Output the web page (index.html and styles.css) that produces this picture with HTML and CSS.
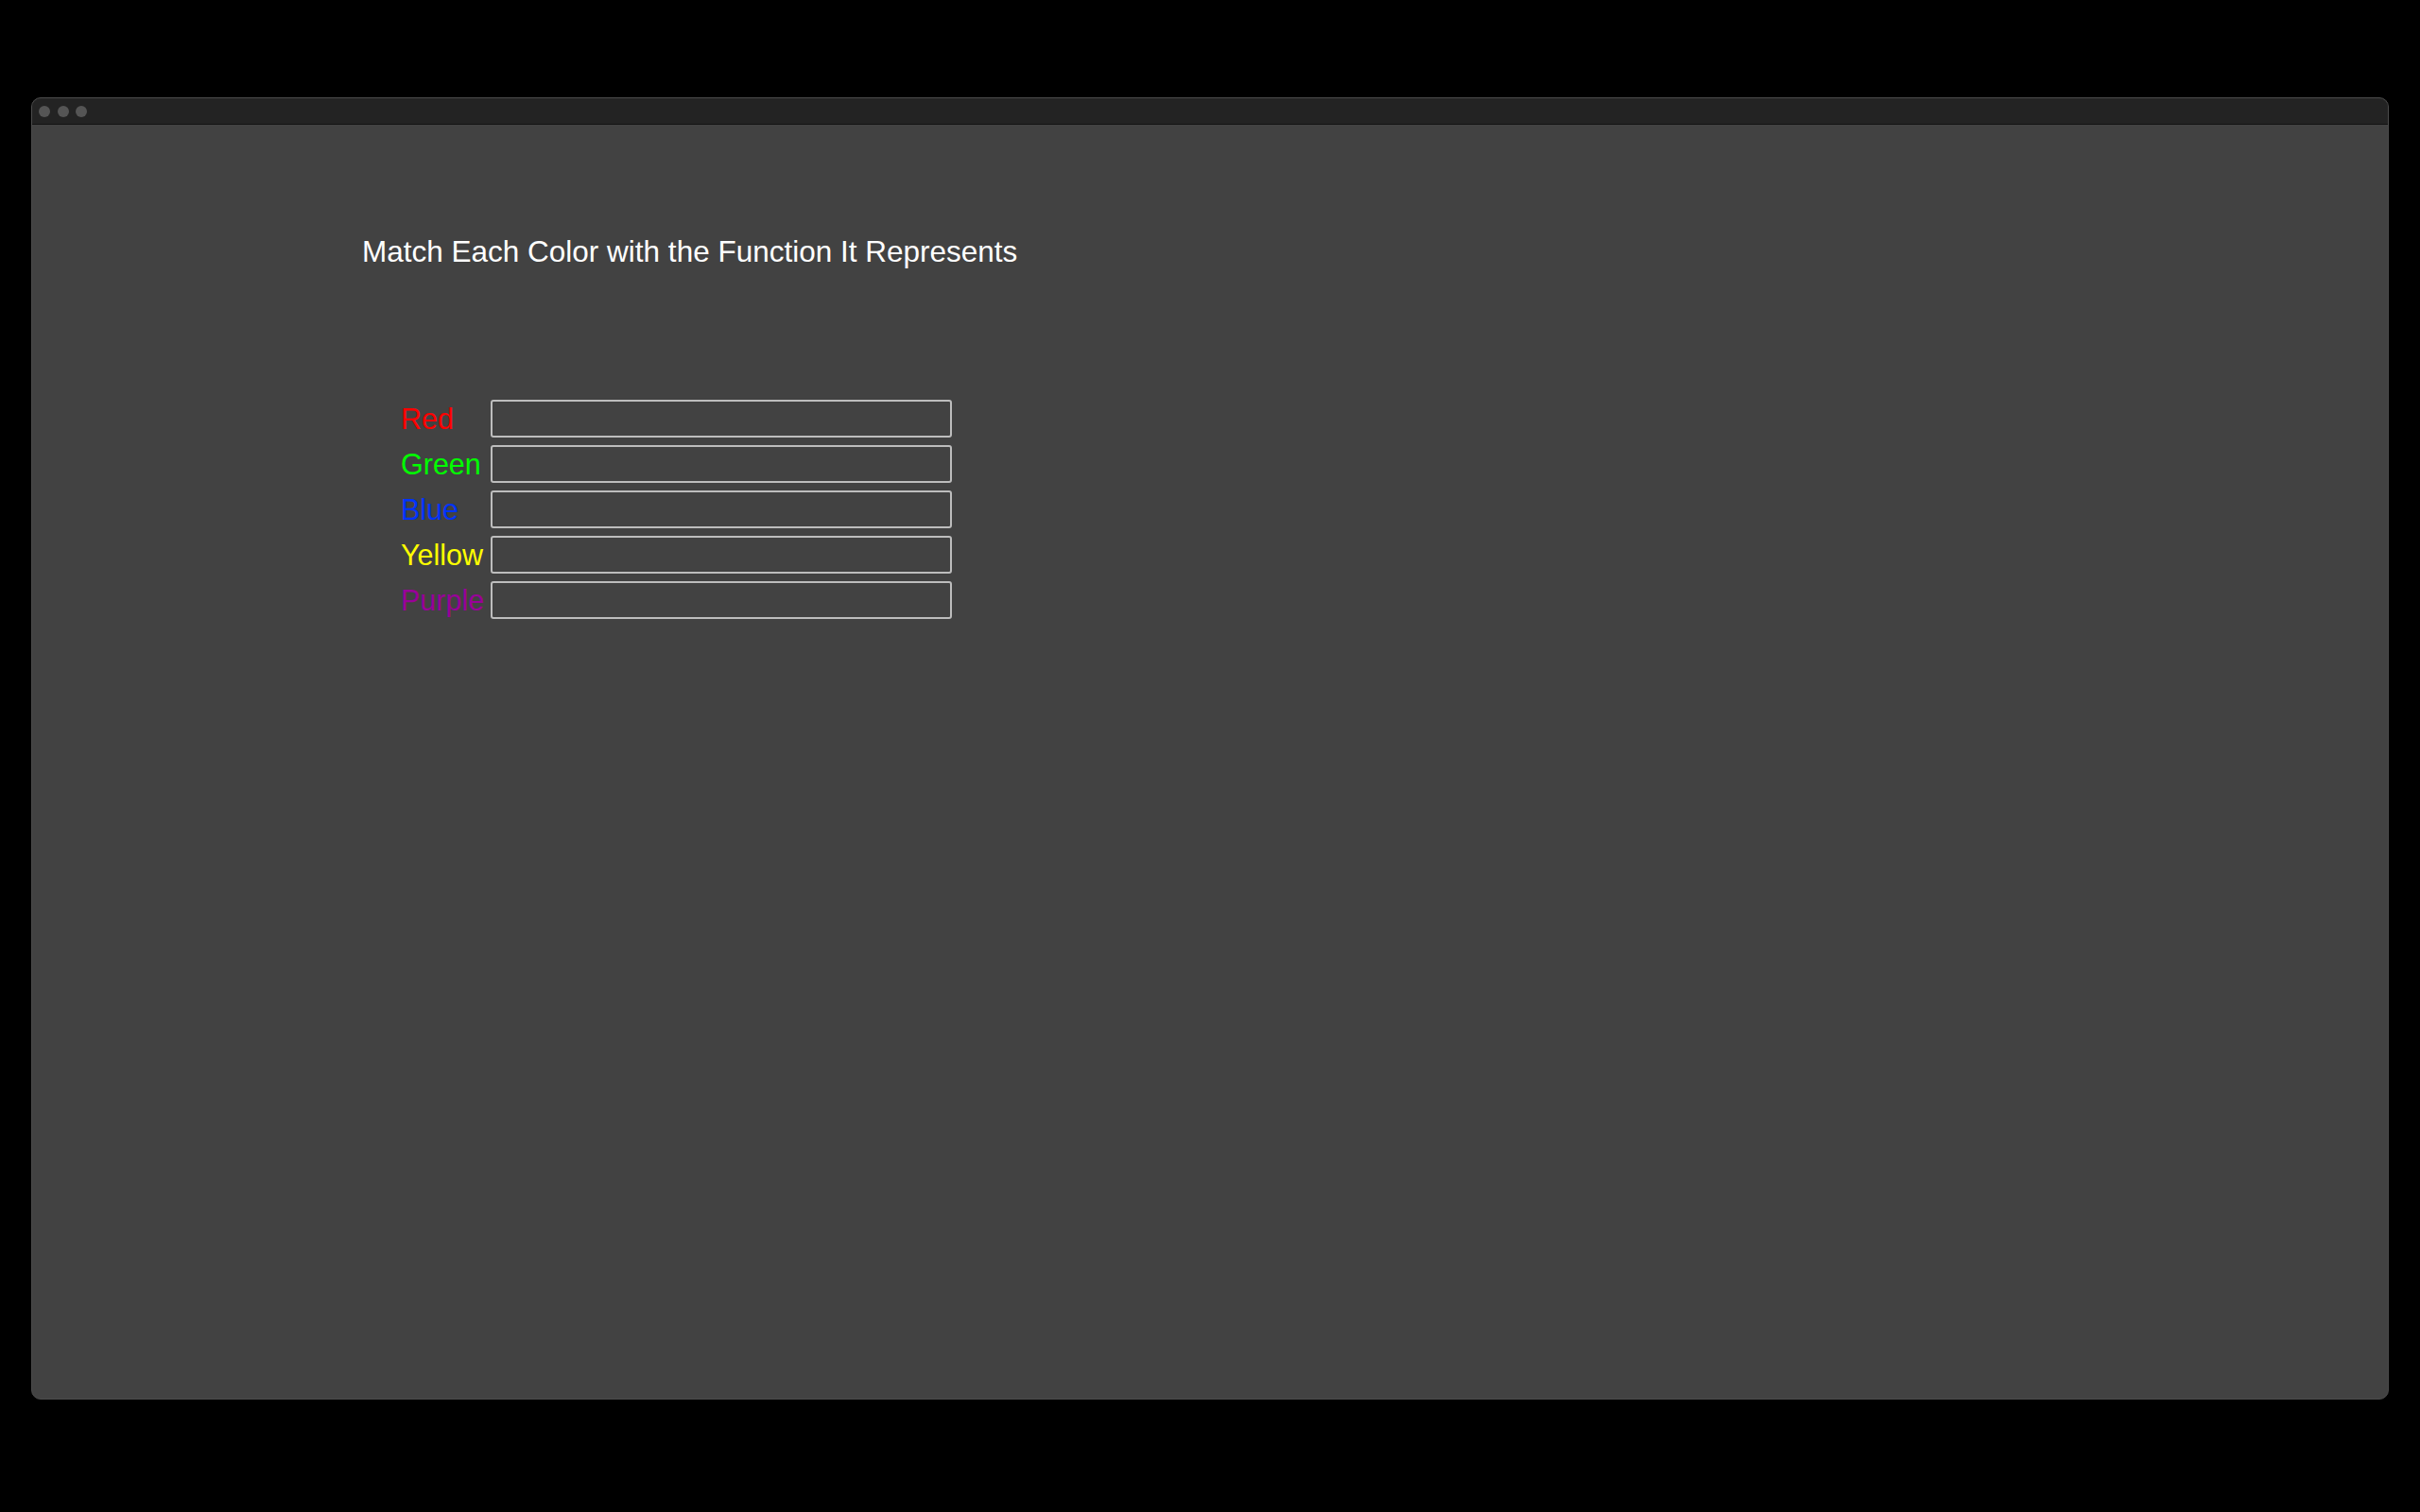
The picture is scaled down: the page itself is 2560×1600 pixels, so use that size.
FILE: index.html
```html
<!DOCTYPE html>
<html lang="en">
<head>
    <meta charset="UTF-8">
    <title>Color Match</title>
    <link rel="stylesheet" href="styles.css">
</head>
<body>

    <div class="window">
        <!-- Window chrome -->
        <div class="titlebar">
            <span class="dot"></span>
            <span class="dot"></span>
            <span class="dot"></span>
        </div>

        <div class="content">
            <h2 class="title">Match Each Color with the Function It Represents</h2>

            <!-- Color rows -->
            <div class="match-list">
                <label class="color-label red" for="fnRed">Red</label>
                <input type="text" id="fnRed" class="match-input">

                <label class="color-label green" for="fnGreen">Green</label>
                <input type="text" id="fnGreen" class="match-input">

                <label class="color-label blue" for="fnBlue">Blue</label>
                <input type="text" id="fnBlue" class="match-input">

                <label class="color-label yellow" for="fnYellow">Yellow</label>
                <input type="text" id="fnYellow" class="match-input">

                <label class="color-label purple" for="fnPurple">Purple</label>
                <input type="text" id="fnPurple" class="match-input">
            </div>
        </div>
    </div>

</body>
</html>
```

FILE: styles.css
```css
/* General Layout */
body {
    margin: 0;
    background-color: #000;
    font-family: 'Liberation Sans', Arial, sans-serif;
}

.window {
    margin: 103px 0 0 33px;
    width: 2494px;
    height: 1378px;
    box-sizing: border-box;
    border: 1px solid #4c4c4c;
    border-radius: 10px;
    overflow: hidden;
    display: flex;
    flex-direction: column;
    background-color: #424242;
}

/* Title bar */
.titlebar {
    height: 27px;
    flex-shrink: 0;
    background-color: #232323;
    border-bottom: 1px solid #141414;
    display: flex;
    align-items: center;
    gap: 7.5px;
    padding-left: 7px;
}

.dot {
    width: 12px;
    height: 12px;
    border-radius: 50%;
    background-color: #555;
}

/* Content */
.content {
    flex: 1;
    padding: 116px 0 0 349px;
}

.title {
    margin: 0;
    color: #fff;
    font-size: 31.5px;
    font-weight: normal;
}

.match-list {
    display: grid;
    grid-template-columns: auto 488px;
    column-gap: 7px;
    row-gap: 8px;
    align-items: center;
    width: max-content;
    margin: 138px 0 0 41px;
}

.color-label {
    font-size: 30.5px;
}

.red { color: #ff0000; }
.green { color: #00ff00; }
.blue { color: #0033ff; }
.yellow { color: #ffff00; }
.purple { color: #990099; }

.match-input {
    height: 40px;
    box-sizing: border-box;
    margin: 0;
    padding: 0 8px;
    border: 2px solid #bdbdbd;
    border-radius: 3px;
    background-color: transparent;
    color: #fff;
    font-size: 24px;
    font-family: inherit;
}
```
